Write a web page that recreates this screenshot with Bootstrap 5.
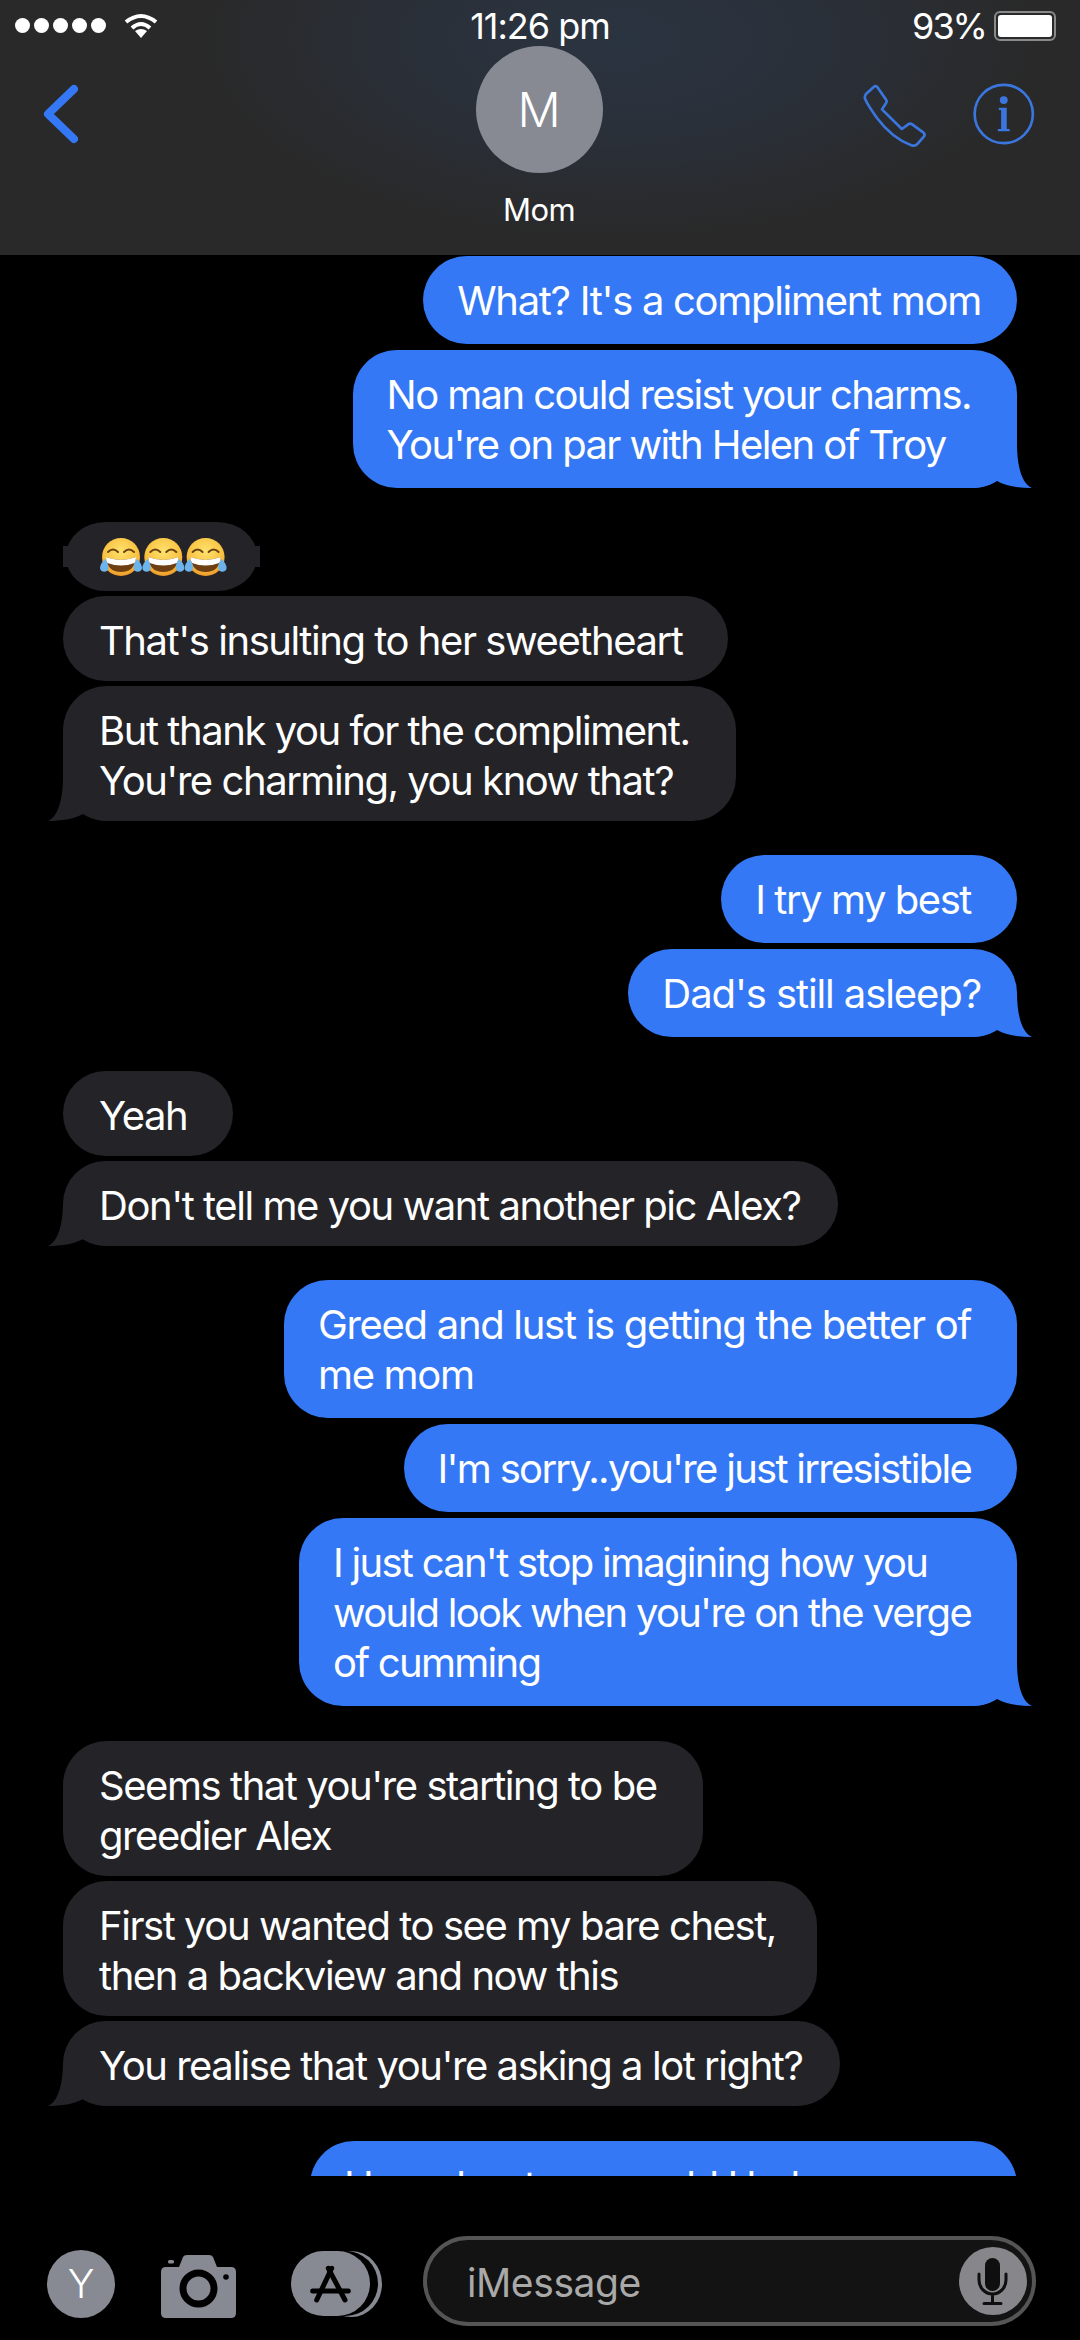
<!DOCTYPE html>
<html lang="en">
<head>
    <meta charset="UTF-8">
    <meta name="viewport" content="width=device-width, initial-scale=1.0">
    <title>Mom</title>
    <link href="https://cdn.jsdelivr.net/npm/bootstrap@5.3.0/dist/css/bootstrap.min.css" rel="stylesheet">
    <style>
        html, body { height: 2340px; overflow: hidden; }
        body {
            background: #000;
            color: #fff;
            font-family: Inter, Roboto, "Liberation Sans", sans-serif;
        }
        .phone { width: 1080px; height: 2340px; }

        .top-head {
            height: 255px;
            background: radial-gradient(ellipse 420px 200px at 620px 40px, #2a3440 0%, #2a303a 45%, #292929 100%);
        }
        .status-row { height: 46px; padding: 5px 24px 0 15px; font-size: 36px; letter-spacing: -1px; }
        .status-col { width: 300px; }
        .status-left { width: 309px; }
        .batt-pct { letter-spacing: -2px; }
        .sig-dot { width: 15px; height: 15px; background: #fff; border-radius: 50%; }
        .wifi-ico { margin-left: 14px; }
        .batt-box { width: 62px; height: 30px; border: 2px solid #8a8a8a; border-radius: 6px; padding: 2px; }
        .batt-fill { background: #fff; border-radius: 3px; height: 100%; }
        .head-main { padding: 0 45px 0 43px; }
        .avatar-disc {
            width: 127px; height: 127px; border-radius: 50%;
            background: #878a92;
            font-size: 48px;
            font-weight: 300;
        }
        .head-name { font-size: 31px; letter-spacing: -.6px; margin-top: 17px; line-height: 40px; }
        .head-side { width: 173px; padding-top: 37px; }
        .ico-gap { gap: 45px; }

        .chat-area { height: 1921px; overflow: hidden; padding: 1px 63px 0; }
        .bub {
            font-size: 40px;
            line-height: 50px;
            letter-spacing: -1.45px;
            border-radius: 44px;
            position: relative;
            white-space: nowrap;
            flex-shrink: 0;
        }
        .bub-me { background: #3478f6; align-self: flex-end; padding: 20px 36px 18px 34px; margin-bottom: 6px; }
        .bub-them { background: #242328; align-self: flex-start; padding: 20px 37px 15px 36px; margin-bottom: 5px; }
        .bub.pad-wide { padding-right: 46px; }
        .bub.pad-mid { padding-right: 41px; }
        .bub.group-gap { margin-bottom: 34px; }
        .bub.group-gap-lg { margin-bottom: 35px; }
        .sp-a { letter-spacing: -1.1px; }
        .sp-b { letter-spacing: -1.3px; }
        .sp-c { letter-spacing: -1.6px; }
        .sp-d { letter-spacing: -1.72px; }
        .last-bub { width: 707px; }
        .tail { position: absolute; bottom: 0; width: 59px; height: 44px; }
        .tail-me { right: -15px; fill: #3478f6; }
        .tail-them { left: -15px; fill: #242328; transform: scaleX(-1); }
        .bub.emoji-bub {
            width: 191px; height: 69px;
            margin-left: 3px;
            padding: 16px 0 0 34px;
            border-radius: 40px / 34px;
        }
        .emoji-bub::before {
            content: ""; position: absolute; left: -3px; right: -3px; top: 24px; height: 21px;
            background: #242328;
        }
        .emoji-bub svg { position: relative; display: block; }

        .input-row { height: 163px; padding: 60px 0 0 47px; }
        .round-y { width: 68px; height: 68px; border-radius: 50%; background: #878a92; font-size: 40px; font-weight: 300; margin-top: 14px; }
        .cam-ico { margin: 17px 0 0 46px; }
        .app-ico { margin: 15px 0 0 55px; }
        .pill-box {
            width: 613px; height: 90px;
            margin-left: 41px;
            border: 4px solid #555;
            border-radius: 45px;
            background: #131313;
            padding: 0 5px 0 40px;
            font-size: 39px;
            letter-spacing: -.4px;
            color: #a9a9a9;
        }
        .pill-label { padding-top: 4px; }
        .mic-disc { width: 68px; height: 68px; border-radius: 50%; background: #87878b; }
    </style>
</head>
<body>
<svg width="0" height="0" class="d-block">
    <defs>
        <path id="tailShape" d="M44 0C44 22 49 40 59 44C46 44 33 42 24 37C17 41 9 44 0 44Z"/>
        <radialGradient id="faceFill" cx=".5" cy=".35" r=".7">
            <stop offset="0" stop-color="#fee26e"/>
            <stop offset=".65" stop-color="#f9c140"/>
            <stop offset="1" stop-color="#ea8f24"/>
        </radialGradient>
        <g id="laughFace">
            <circle cx="21" cy="19" r="19" fill="url(#faceFill)"/>
            <path d="M8 14Q13 9 18 14M24 14Q29 9 34 14" fill="none" stroke="#6b4313" stroke-width="2" stroke-linecap="round"/>
            <path d="M6 19Q21 25 36 19Q35 34 21 34Q7 34 6 19Z" fill="#6e3f12"/>
            <path d="M6 19Q21 25 36 19Q36 23 34.500 25Q21 30 7.500 25Q6 23 6 19Z" fill="#fff"/>
            <path d="M5 21C8 25 10 30 7 33C4 35 0 33 0 30C0 27 2 24 5 21Z" fill="#6db3ec"/>
            <path d="M37 21C34 25 32 30 35 33C38 35 42 33 42 30C42 27 40 24 37 21Z" fill="#6db3ec"/>
        </g>
    </defs>
</svg>
<div class="phone d-flex flex-column">
    <div class="top-head">
        <div class="status-row d-flex justify-content-between align-items-center">
            <div class="status-left d-flex align-items-center gap-1">
                <span class="sig-dot"></span><span class="sig-dot"></span><span class="sig-dot"></span><span class="sig-dot"></span><span class="sig-dot"></span>
                <svg class="wifi-ico" width="34" height="26" viewBox="0 0 34 26"><g fill="none" stroke="#fff" stroke-width="4"><path d="M2 9Q17-3 32 9"/><path d="M8 15Q17 7 26 15"/></g><path d="M11 18Q17 14 23 18L17 25Z" fill="#fff"/></svg>
            </div>
            <div>11:26 pm</div>
            <div class="status-col d-flex align-items-center justify-content-end gap-2">
                <span class="batt-pct">93%</span>
                <div class="batt-box"><div class="batt-fill"></div></div>
            </div>
        </div>
        <div class="head-main d-flex justify-content-between align-items-start">
            <div class="head-side">
                <svg class="d-block" width="40" height="62" viewBox="0 0 40 62"><path d="M31 6L5 31L31 56" fill="none" stroke="#3478f6" stroke-width="8" stroke-linecap="round" stroke-linejoin="round"/></svg>
            </div>
            <div class="d-flex flex-column align-items-center">
                <div class="avatar-disc d-flex align-items-center justify-content-center">M</div>
                <div class="head-name">Mom</div>
            </div>
            <div class="head-side d-flex justify-content-end align-items-start ico-gap">
                <svg class="d-block" width="67" height="65" viewBox="60 45 200 195"><path d="M72 78L96 56Q102 52 107 58L133 96Q136 102 131 107L120 124L180 183L199 169Q205 165 211 169L245 194Q251 200 246 206L227 228Q220 236 208 232Q150 210 105 150Q78 112 69 92Q67 84 72 78Z" fill="none" stroke="#3a76dd" stroke-width="8" stroke-linejoin="round"/></svg>
                <svg class="d-block" width="62" height="62" viewBox="397 50 186 186"><circle cx="490" cy="143" r="88" fill="none" stroke="#3a76dd" stroke-width="8"/><circle cx="490" cy="101" r="12" fill="#3a76dd"/><path d="M475 124H499V188H508V195H472V188H482V131H475Z" fill="#3a76dd"/></svg>
            </div>
        </div>
    </div>
    <div class="chat-area d-flex flex-column">
        <div class="bub bub-me sp-b">What? It's a compliment mom</div>
        <div class="bub bub-me pad-wide sp-c group-gap">No man could resist your charms.<br>You're on par with Helen of Troy<svg class="tail tail-me" viewBox="0 0 59 44"><use href="#tailShape"/></svg></div>
        <div class="bub bub-them emoji-bub"><svg width="128" height="40" viewBox="0 0 128 40"><use href="#laughFace"/><use href="#laughFace" x="42.300"/><use href="#laughFace" x="84.600"/></svg></div>
        <div class="bub bub-them pad-wide">That's insulting to her sweetheart</div>
        <div class="bub bub-them pad-wide group-gap">But thank you for the compliment.<br>You're charming, you know that?<svg class="tail tail-them" viewBox="0 0 59 44"><use href="#tailShape"/></svg></div>
        <div class="bub bub-me pad-wide">I try my best</div>
        <div class="bub bub-me sp-a group-gap">Dad's still asleep?<svg class="tail tail-me" viewBox="0 0 59 44"><use href="#tailShape"/></svg></div>
        <div class="bub bub-them pad-wide">Yeah</div>
        <div class="bub bub-them group-gap">Don't tell me you want another pic Alex?<svg class="tail tail-them" viewBox="0 0 59 44"><use href="#tailShape"/></svg></div>
        <div class="bub bub-me pad-wide sp-b">Greed and lust is getting the better of<br>me mom</div>
        <div class="bub bub-me pad-wide sp-d">I'm sorry..you're just irresistible</div>
        <div class="bub bub-me pad-wide sp-d group-gap-lg">I just can't stop imagining how you<br>would look when you're on the verge<br>of cumming<svg class="tail tail-me" viewBox="0 0 59 44"><use href="#tailShape"/></svg></div>
        <div class="bub bub-them pad-wide">Seems that you're starting to be<br>greedier Alex</div>
        <div class="bub bub-them pad-mid">First you wanted to see my bare chest,<br>then a backview and now this</div>
        <div class="bub bub-them group-gap-lg">You realise that you're asking a lot right?<svg class="tail tail-them" viewBox="0 0 59 44"><use href="#tailShape"/></svg></div>
        <div class="bub bub-me last-bub">How about you could I help you</div>
    </div>
    <div class="input-row d-flex align-items-start">
        <div class="round-y d-flex align-items-center justify-content-center">Y</div>
        <svg class="cam-ico d-block" width="75" height="65" viewBox="0 0 75 65">
            <path d="M5 14H18L22 4Q23 2 26 2H48Q51 2 52 4L56 14H70Q75 14 75 19V60Q75 65 70 65H5Q0 65 0 60V19Q0 14 5 14Z" fill="#878a92"/>
            <rect x="7" y="7" width="6" height="3.500" rx="1.500" fill="#878a92"/>
            <circle cx="37.500" cy="35.500" r="15.500" fill="none" stroke="#000" stroke-width="7"/>
            <circle cx="65" cy="24" r="2.800" fill="#000"/>
        </svg>
        <svg class="app-ico d-block" width="91" height="66" viewBox="0 0 91 66">
            <rect x="30" y="0" width="61" height="66" rx="33" fill="#878a92"/>
            <rect x="4" y="0" width="83" height="65" rx="32.500" fill="#000"/>
            <rect x="0" y="0" width="79" height="65" rx="32.500" fill="#878a92"/>
            <g stroke="#000" stroke-linecap="round" fill="none">
                <path d="M40.700 17.300L25.700 49" stroke-width="5"/>
                <path d="M37.300 17.300L54 49" stroke-width="5"/>
                <path d="M21.700 40H57.300" stroke-width="5"/>
            </g>
        </svg>
        <div class="pill-box d-flex align-items-center justify-content-between">
            <span class="pill-label">iMessage</span>
            <div class="mic-disc">
                <svg class="d-block" width="68" height="68" viewBox="0 0 68 68">
                    <rect x="26" y="11" width="15" height="33" rx="7.500" fill="#0f0f0f"/>
                    <path d="M20 27V33A13.500 14 0 0 0 47 33V27M33.500 47V56M25 56.500H42" fill="none" stroke="#0f0f0f" stroke-width="3" stroke-linecap="round"/>
                </svg>
            </div>
        </div>
    </div>
</div>
</body>
</html>
